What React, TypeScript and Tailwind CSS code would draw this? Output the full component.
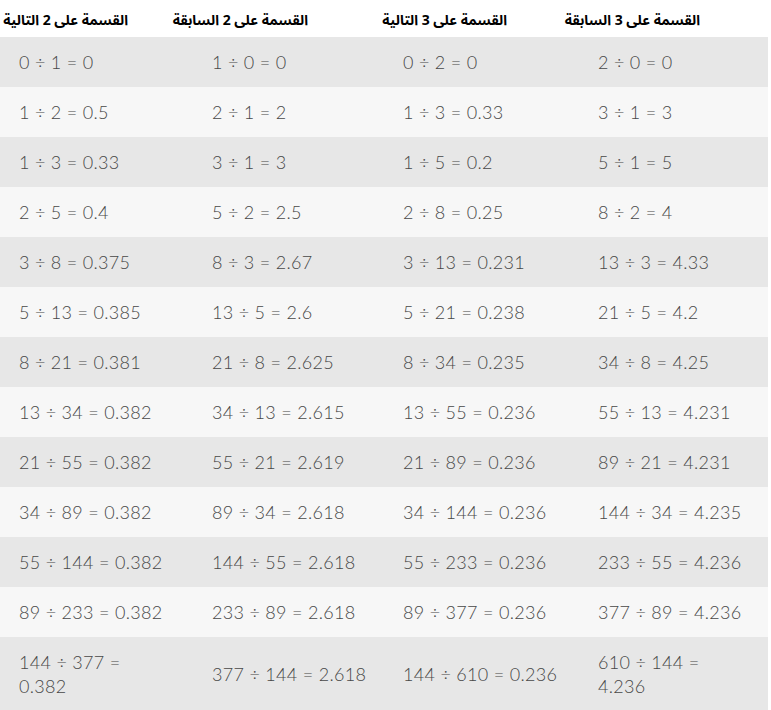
const headers = [
  { label: "القسمة على 2 التالية", pr: "pr-[67px]" },
  { label: "القسمة على 2 السابقة", pr: "pr-[78px]" },
  { label: "القسمة على 3 التالية", pr: "pr-[73px]" },
  { label: "القسمة على 3 السابقة", pr: "pr-[68px]" },
]

const rows: string[][] = [
  ["0 ÷ 1 = 0", "1 ÷ 0 = 0", "0 ÷ 2 = 0", "2 ÷ 0 = 0"],
  ["1 ÷ 2 = 0.5", "2 ÷ 1 = 2", "1 ÷ 3 = 0.33", "3 ÷ 1 = 3"],
  ["1 ÷ 3 = 0.33", "3 ÷ 1 = 3", "1 ÷ 5 = 0.2", "5 ÷ 1 = 5"],
  ["2 ÷ 5 = 0.4", "5 ÷ 2 = 2.5", "2 ÷ 8 = 0.25", "8 ÷ 2 = 4"],
  ["3 ÷ 8 = 0.375", "8 ÷ 3 = 2.67", "3 ÷ 13 = 0.231", "13 ÷ 3 = 4.33"],
  ["5 ÷ 13 = 0.385", "13 ÷ 5 = 2.6", "5 ÷ 21 = 0.238", "21 ÷ 5 = 4.2"],
  ["8 ÷ 21 = 0.381", "21 ÷ 8 = 2.625", "8 ÷ 34 = 0.235", "34 ÷ 8 = 4.25"],
  ["13 ÷ 34 = 0.382", "34 ÷ 13 = 2.615", "13 ÷ 55 = 0.236", "55 ÷ 13 = 4.231"],
  ["21 ÷ 55 = 0.382", "55 ÷ 21 = 2.619", "21 ÷ 89 = 0.236", "89 ÷ 21 = 4.231"],
  ["34 ÷ 89 = 0.382", "89 ÷ 34 = 2.618", "34 ÷ 144 = 0.236", "144 ÷ 34 = 4.235"],
  ["55 ÷ 144 = 0.382", "144 ÷ 55 = 2.618", "55 ÷ 233 = 0.236", "233 ÷ 55 = 4.236"],
  ["89 ÷ 233 = 0.382", "233 ÷ 89 = 2.618", "89 ÷ 377 = 0.236", "377 ÷ 89 = 4.236"],
  ["144 ÷ 377 =\n0.382", "377 ÷ 144 = 2.618", "144 ÷ 610 = 0.236", "610 ÷ 144 =\n4.236"],
]

const widths = ["w-[195px]", "w-[191px]", "w-[194px]", "w-[188px]"]
const pads = ["pl-[19px]", "pl-[17px]", "pl-[17px]", "pl-[18px]"]

export default function App() {
  return (
    <div className="w-[771px] h-[710px] bg-white overflow-hidden">
      <table className="w-[768px] table-fixed border-collapse">
        <thead>
          <tr className="h-[37px] bg-white">
            {headers.map((h, i) => (
              <th
                key={i}
                dir="rtl"
                className={`${widths[i]} ${h.pr} pl-0 pt-[3px] pb-0 text-right align-middle font-bold text-[14px] text-black whitespace-nowrap`}
                style={{ fontFamily: '"Noto Sans Arabic", "Noto Kufi Arabic", "DejaVu Sans Condensed", sans-serif' }}
              >
                {h.label}
              </th>
            ))}
          </tr>
        </thead>
        <tbody>
          {rows.map((r, ri) => (
            <tr key={ri} className={ri % 2 === 0 ? "bg-[#e7e7e7]" : "bg-[#f7f7f7]"}>
              {r.map((c, ci) => (
                <td
                  key={ci}
                  className={`${widths[ci]} ${pads[ci]} pr-0 py-[13px] text-left align-middle text-[18px] leading-[24px] tracking-[0.3px] font-light text-[#484848] whitespace-pre`}
                  style={{ fontFamily: 'Lato, "Liberation Sans", sans-serif' }}
                >
                  {c}
                </td>
              ))}
            </tr>
          ))}
        </tbody>
      </table>
    </div>
  )
}
